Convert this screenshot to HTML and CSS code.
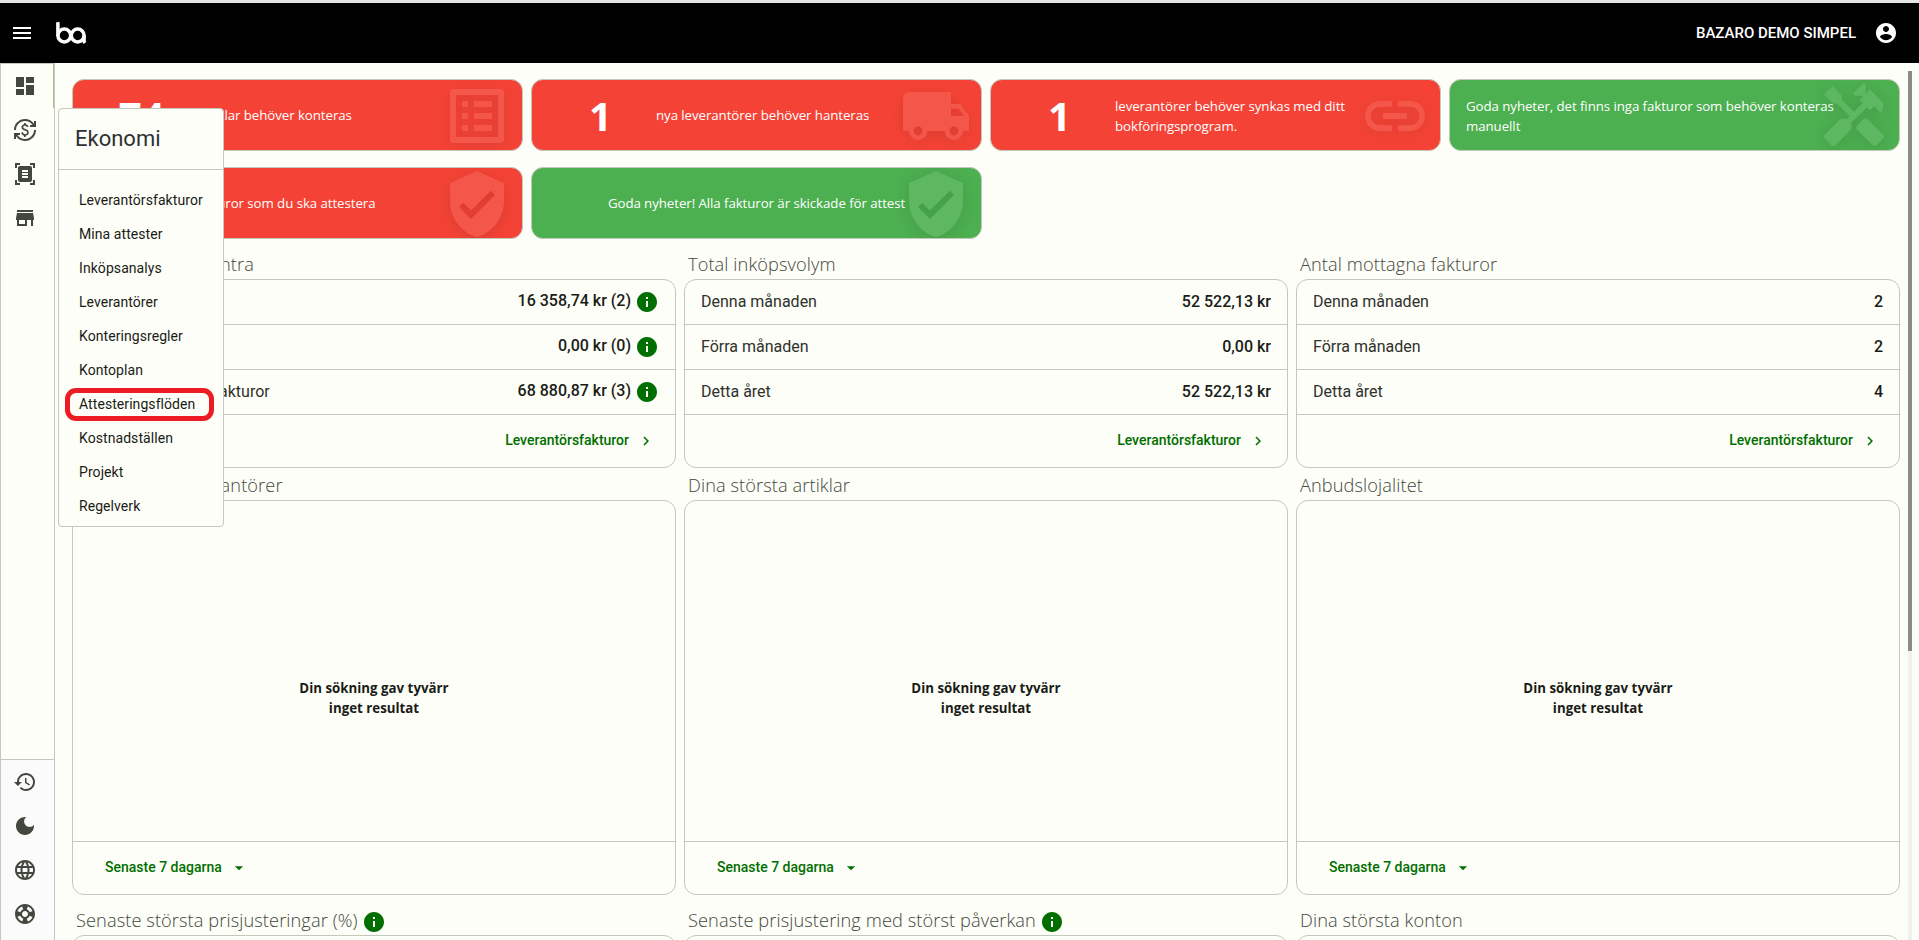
FILE: index.html
```html
<!DOCTYPE html>
<html lang="sv">
<head>
  <meta charset="UTF-8" />
  <meta name="viewport" content="width=device-width, initial-scale=1.0" />
  <title>Bazaro</title>
  <link rel="stylesheet" href="styles.css">
</head>
<body>
  <!-- shared icons -->
  <svg class="sprite">
    <symbol id="i-info" viewBox="0 0 24 24"><path d="M12 2C6.48 2 2 6.48 2 12s4.48 10 10 10 10-4.48 10-10S17.52 2 12 2zm1 15h-2v-6h2v6zm0-8h-2V7h2v2z"/></symbol>
    <symbol id="i-next" viewBox="0 0 24 24"><path d="M10 6L8.59 7.41 13.17 12l-4.58 4.59L10 18l6-6z"/></symbol>
    <symbol id="i-down" viewBox="0 0 24 24"><path d="M6.500 9.500l5.500 5.500 5.500-5.500z"/></symbol>
    <symbol id="i-shield" viewBox="0 0 24 24"><path d="M12 1L3 5v6c0 5.55 3.84 10.74 9 12 5.16-1.26 9-6.45 9-12V5l-9-4zm-2 16l-4-4 1.41-1.41L10 14.17l6.59-6.59L18 9l-8 8z"/></symbol>
  </svg>

  <header class="topbar">
    <svg class="icon" viewBox="0 0 24 24"><path d="M3 18h18v-2H3v2zm0-5h18v-2H3v2zm0-7v2h18V6H3z"/></svg>
    <svg class="logo" viewBox="0 0 32 24">
      <path d="M2.7 1.2q.2 1 .2 3v10.500M29.100 14.500v5q0 1.500.8 2.500"/>
      <circle cx="9.300" cy="14.500" r="6.400"/>
      <circle cx="22.700" cy="14.500" r="6.400"/>
    </svg>
    <span class="company">BAZARO DEMO SIMPEL</span>
    <svg class="icon" viewBox="0 0 24 24"><path d="M12 2C6.48 2 2 6.48 2 12s4.48 10 10 10 10-4.48 10-10S17.52 2 12 2zm0 3c1.66 0 3 1.34 3 3s-1.34 3-3 3-3-1.34-3-3 1.34-3 3-3zm0 14.2c-2.5 0-4.71-1.28-6-3.22.03-1.99 4-3.08 6-3.08 1.99 0 5.97 1.09 6 3.08-1.29 1.94-3.5 3.22-6 3.22z"/></svg>
  </header>

  <div class="layout">
    <nav class="sidebar">
      <div class="sidebar-main">
        <svg class="icon" viewBox="0 0 24 24"><path d="M3 13h8V3H3v10zm0 8h8v-6H3v6zm10 0h8V11h-8v10zm0-18v6h8V3h-8z"/></svg>
        <svg class="icon" viewBox="0 0 24 24"><path d="M12.89 11.1c-1.78-.59-2.64-.96-2.64-1.9 0-1.02 1.11-1.39 1.81-1.39 1.31 0 1.79.99 1.9 1.34l1.58-.67c-.15-.44-.82-1.91-2.66-2.23V5h-1.75v1.26c-2.6.56-2.62 2.85-2.62 2.96 0 2.27 2.25 2.91 3.35 3.31 1.58.56 2.28 1.07 2.28 2.03 0 1.13-1.05 1.61-1.98 1.61-1.82 0-2.34-1.87-2.4-2.09l-1.66.67c.63 2.19 2.28 2.78 2.9 2.96V19h1.75v-1.24c.52-.09 3.02-.59 3.02-3.22.01-1.39-.6-2.61-3-3.44zM3 21H1v-6h6v2H4.52c1.61 2.41 4.36 4 7.48 4 4.97 0 9-4.03 9-9h2c0 6.08-4.92 11-11 11-3.72 0-7.01-1.85-9-4.67V21zM1 12C1 5.92 5.92 1 12 1c3.72 0 7.01 1.85 9 4.67V3h2v6h-6V7h2.48C17.87 4.59 15.12 3 12 3c-4.97 0-9 4.03-9 9H1z"/></svg>
        <svg class="icon" viewBox="0 0 24 24"><path d="M7 3H4v3H2V1h5v2zm15 3V1h-5v2h3v3h2zM7 21H4v-3H2v5h5v-2zm13-3v3h-3v2h5v-5h-2zM19 18c0 1.1-.9 2-2 2H7c-1.1 0-2-.9-2-2V6c0-1.1.9-2 2-2h10c1.1 0 2 .9 2 2v12zM15 8H9v2h6V8zm0 3H9v2h6v-2zm0 3H9v2h6v-2z"/></svg>
        <svg class="icon" viewBox="0 0 24 24"><path d="M20 4H4v2h16V4zm1 10v-2l-1-5H4l-1 5v2h1v6h10v-6h4v6h2v-6h1zm-9 4H6v-4h6v4z"/></svg>
      </div>
      <div class="sidebar-bottom">
        <svg class="icon" viewBox="0 0 24 24"><path d="M13 3c-4.97 0-9 4.03-9 9H1l3.89 3.89.07.14L9 12H6c0-3.87 3.13-7 7-7s7 3.13 7 7-3.13 7-7 7c-1.93 0-3.68-.79-4.94-2.06l-1.42 1.42C8.27 19.99 10.51 21 13 21c4.97 0 9-4.03 9-9s-4.03-9-9-9zm-1 5v5l4.28 2.54.72-1.21-3.5-2.08V8H12z"/></svg>
        <svg class="icon" viewBox="0 0 24 24"><path d="M12 3c-4.97 0-9 4.03-9 9s4.03 9 9 9 9-4.03 9-9c0-.46-.04-.92-.1-1.36-.98 1.37-2.58 2.26-4.4 2.26-2.98 0-5.4-2.42-5.4-5.4 0-1.81.89-3.42 2.26-4.4-.44-.06-.9-.1-1.36-.1z"/></svg>
        <svg class="icon" viewBox="0 0 24 24"><path d="M11.99 2C6.47 2 2 6.48 2 12s4.47 10 9.99 10C17.52 22 22 17.52 22 12S17.52 2 11.99 2zm6.93 6h-2.95c-.32-1.25-.78-2.45-1.38-3.56 1.84.63 3.37 1.91 4.33 3.56zM12 4.04c.83 1.2 1.48 2.53 1.91 3.96h-3.82c.43-1.43 1.08-2.76 1.91-3.96zM4.26 14C4.1 13.36 4 12.69 4 12s.1-1.36.26-2h3.38c-.08.66-.14 1.32-.14 2s.06 1.34.14 2H4.26zm.82 2h2.95c.32 1.25.78 2.45 1.38 3.56-1.84-.63-3.37-1.9-4.33-3.56zm2.95-8H5.08c.96-1.66 2.49-2.93 4.33-3.56C8.81 5.55 8.35 6.75 8.03 8zM12 19.96c-.83-1.2-1.48-2.53-1.91-3.96h3.82c-.43 1.43-1.08 2.76-1.91 3.96zM14.34 14H9.66c-.09-.66-.16-1.32-.16-2s.07-1.35.16-2h4.68c.09.65.16 1.32.16 2s-.07 1.34-.16 2zm.25 5.56c.6-1.11 1.06-2.31 1.38-3.56h2.95c-.96 1.65-2.49 2.93-4.33 3.56zM16.36 14c.08-.66.14-1.32.14-2s-.06-1.34-.14-2h3.38c.16.64.26 1.31.26 2s-.1 1.36-.26 2h-3.38z"/></svg>
        <svg class="icon" viewBox="0 0 24 24"><path d="M12 2C6.48 2 2 6.48 2 12s4.48 10 10 10 10-4.48 10-10S17.52 2 12 2zm7.46 7.12l-2.78 1.15c-.51-1.36-1.58-2.44-2.95-2.94l1.15-2.78c2.1.8 3.77 2.47 4.58 4.57zM12 15c-1.66 0-3-1.34-3-3s1.34-3 3-3 3 1.34 3 3-1.34 3-3 3zM9.13 4.54l1.17 2.78c-1.38.5-2.47 1.59-2.98 2.97L4.54 9.13c.81-2.11 2.48-3.78 4.59-4.59zM4.54 14.87l2.78-1.15c.51 1.38 1.59 2.46 2.97 2.96l-1.17 2.78c-2.1-.81-3.77-2.48-4.58-4.59zm10.34 4.59l-1.15-2.78c1.37-.51 2.45-1.59 2.95-2.97l2.78 1.17c-.81 2.1-2.48 3.77-4.58 4.58z"/></svg>
      </div>
      <div class="active-line"></div>
    </nav>

    <main class="content">
      <section class="alerts">
        <div class="alert red single">
          <b class="number">74</b>
          <p>artiklar behöver konteras</p>
          <svg class="alert-icon" viewBox="0 0 24 24"><path d="M19 5v14H5V5h14m1.1-2H3.9c-.5 0-.9.4-.9.9v16.2c0 .4.4.9.9.9h16.2c.4 0 .9-.5.9-.9V3.9c0-.5-.5-.9-.9-.9zM11 7h6v2h-6V7zm0 4h6v2h-6v-2zm0 4h6v2h-6zM7 7h2v2H7zm0 4h2v2H7zm0 4h2v2H7z"/></svg>
        </div>
        <div class="alert red single">
          <b class="number">1</b>
          <p>nya leverantörer behöver hanteras</p>
          <svg class="alert-icon" viewBox="0 0 24 24"><path d="M20 8h-3V4H3c-1.1 0-2 .9-2 2v11h2c0 1.66 1.34 3 3 3s3-1.34 3-3h6c0 1.66 1.34 3 3 3s3-1.34 3-3h2v-5l-3-4zM6 18.5c-.83 0-1.5-.67-1.5-1.5s.67-1.5 1.5-1.5 1.5.67 1.5 1.5-.67 1.5-1.5 1.5zm13.5-9l1.96 2.5H17V9.5h2.5zm-1.5 9c-.83 0-1.5-.67-1.5-1.5s.67-1.5 1.5-1.5 1.5.67 1.5 1.5-.67 1.5-1.5 1.5z"/></svg>
        </div>
        <div class="alert red">
          <b class="number">1</b>
          <p>leverantörer behöver synkas med ditt<br>bokföringsprogram.</p>
          <svg class="alert-icon" viewBox="0 0 24 24"><path d="M3.9 12c0-1.71 1.39-3.1 3.1-3.1h4V7H7c-2.76 0-5 2.24-5 5s2.24 5 5 5h4v-1.9H7c-1.71 0-3.1-1.39-3.1-3.1zM8 13h8v-2H8v2zm9-6h-4v1.9h4c1.71 0 3.1 1.39 3.1 3.1s-1.39 3.1-3.1 3.1h-4V17h4c2.76 0 5-2.24 5-5s-2.24-5-5-5z"/></svg>
        </div>
        <div class="alert green">
          <p>Goda nyheter, det finns inga fakturor som behöver konteras<br>manuellt</p>
          <svg class="alert-icon" viewBox="0 0 24 24"><path d="M21.67 18.17l-5.3-5.3h-.99l-2.54 2.54v.99l5.3 5.3c.39.39 1.02.39 1.41 0l2.12-2.12c.39-.38.39-1.02 0-1.41zM17.34 10.19l1.41-1.41 2.12 2.12c1.17-1.17 1.17-3.07 0-4.24l-3.54-3.54-1.41 1.41V1.71L15.22 1l-3.54 3.54.71.71h2.83l-1.41 1.41 1.06 1.06-2.89 2.89-4.13-4.13V5.06L4.83 2.04 2 4.87 5.03 7.9h1.41l4.13 4.13-.85.85H7.6l-5.3 5.3c-.39.39-.39 1.02 0 1.41l2.12 2.12c.39.39 1.02.39 1.41 0l5.3-5.3v-2.12l5.15-5.15 1.06 1.05z"/></svg>
        </div>
        <div class="alert red single attest">
          <b class="number">2</b>
          <p>fakturor som du ska attestera</p>
          <svg class="alert-icon"><use href="#i-shield"/></svg>
        </div>
        <div class="alert green single center">
          <p>Goda nyheter! Alla fakturor är skickade för attest</p>
          <svg class="alert-icon"><use href="#i-shield"/></svg>
        </div>
      </section>

      <section class="cards">
        <div>
          <h2>Leverantörsreskontra</h2>
          <div class="card">
            <div class="row"><span>Förfallna</span><b class="up">16 358,74 kr (2)</b><svg class="info"><use href="#i-info"/></svg></div>
            <div class="row"><span>Att betala</span><b class="up">0,00 kr (0)</b><svg class="info"><use href="#i-info"/></svg></div>
            <div class="row"><span>Totalt oreglerade fakturor</span><b class="up">68 880,87 kr (3)</b><svg class="info"><use href="#i-info"/></svg></div>
            <div class="foot right"><a>Leverantörsfakturor</a><svg><use href="#i-next"/></svg></div>
          </div>
        </div>
        <div>
          <h2>Total inköpsvolym</h2>
          <div class="card">
            <div class="row"><span>Denna månaden</span><b>52 522,13 kr</b></div>
            <div class="row"><span>Förra månaden</span><b>0,00 kr</b></div>
            <div class="row"><span>Detta året</span><b>52 522,13 kr</b></div>
            <div class="foot right"><a>Leverantörsfakturor</a><svg><use href="#i-next"/></svg></div>
          </div>
        </div>
        <div>
          <h2>Antal mottagna fakturor</h2>
          <div class="card">
            <div class="row"><span>Denna månaden</span><b>2</b></div>
            <div class="row"><span>Förra månaden</span><b>2</b></div>
            <div class="row"><span>Detta året</span><b>4</b></div>
            <div class="foot right"><a>Leverantörsfakturor</a><svg><use href="#i-next"/></svg></div>
          </div>
        </div>

        <div>
          <h2>Dina största leverantörer</h2>
          <div class="card">
            <div class="empty">Din sökning gav tyvärr<br>inget resultat</div>
            <div class="foot"><a>Senaste 7 dagarna</a><svg><use href="#i-down"/></svg></div>
          </div>
        </div>
        <div>
          <h2>Dina största artiklar</h2>
          <div class="card">
            <div class="empty">Din sökning gav tyvärr<br>inget resultat</div>
            <div class="foot"><a>Senaste 7 dagarna</a><svg><use href="#i-down"/></svg></div>
          </div>
        </div>
        <div>
          <h2>Anbudslojalitet</h2>
          <div class="card">
            <div class="empty">Din sökning gav tyvärr<br>inget resultat</div>
            <div class="foot"><a>Senaste 7 dagarna</a><svg><use href="#i-down"/></svg></div>
          </div>
        </div>

        <div>
          <h2 class="tall">Senaste största prisjusteringar (%)<svg class="info"><use href="#i-info"/></svg></h2>
          <div class="card last"></div>
        </div>
        <div>
          <h2 class="tall">Senaste prisjustering med störst påverkan<svg class="info"><use href="#i-info"/></svg></h2>
          <div class="card last"></div>
        </div>
        <div>
          <h2 class="tall">Dina största konton</h2>
          <div class="card last"></div>
        </div>
      </section>
    </main>
    <div class="scrollbar"><div class="thumb"></div></div>
  </div>

  <!-- submenu -->
  <div class="submenu">
    <h3>Ekonomi</h3>
    <ul>
      <li>Leverantörsfakturor</li>
      <li>Mina attester</li>
      <li>Inköpsanalys</li>
      <li>Leverantörer</li>
      <li>Konteringsregler</li>
      <li>Kontoplan</li>
      <li class="marked">Attesteringsflöden</li>
      <li>Kostnadställen</li>
      <li>Projekt</li>
      <li>Regelverk</li>
    </ul>
  </div>
</body>
</html>
```

FILE: styles.css
```css
*,
*::after {
  box-sizing: border-box;
}

body {
  margin: 0;
  height: 100vh;
  overflow: hidden;
  display: flex;
  flex-direction: column;
  background-color: #fdfef7;
  color: #1a1c18;
  font-family: Roboto, sans-serif;
}

svg {
  fill: currentColor;
  flex: none;
}

.sprite {
  display: none;
}

.icon {
  width: 24px;
  height: 24px;
}

.topbar {
  flex: none;
  height: 63px;
  border-top: 3px solid #e5e5e5;
  padding: 0 21px 0 10px;
  display: flex;
  align-items: center;
  background-color: black;
  color: white;
}

.logo {
  width: 32px;
  height: 24px;
  margin-left: 21px;
  fill: none;
  stroke: white;
  stroke-width: 3.5;
}

.company {
  margin-left: auto;
  margin-right: 18px;
  font-size: 15px;
  font-weight: 500;
}

.layout {
  flex: 1;
  min-height: 0;
  display: flex;
}

.sidebar {
  position: relative;
  width: 55px;
  flex: none;
  border: 1px solid #c3c8bb;
  border-bottom: none;
  display: flex;
  flex-direction: column;
  color: #43483e;
}

.sidebar-main,
.sidebar-bottom {
  display: flex;
  flex-direction: column;
  gap: 20px;
  padding: 10px 12px;
}

.sidebar-main {
  flex: 1;
}

.sidebar-bottom {
  height: 181px;
  border-top: 1px solid #c3c8bb;
  background-color: #fbfbfc;
}

.active-line {
  position: absolute;
  top: 0;
  right: 0;
  width: 1px;
  height: 44px;
  background-color: #a3c394;
}

.content {
  flex: 1;
  padding: 16px 4px 0 17px;
  overflow: hidden;
}

.alerts {
  display: grid;
  grid-template-columns: repeat(4, 1fr);
  gap: 16px 8px;
}

.alert {
  position: relative;
  height: 72px;
  border: 1px solid #c3c8bb;
  border-radius: 12px;
  padding: 1px 16px 0;
  display: flex;
  align-items: center;
  overflow: hidden;
  color: white;
  font-family: "Open Sans", sans-serif;
  font-size: 13.3px;
  font-weight: 500;
  letter-spacing: -0.08px;
  line-height: 20px;
}

.alert p {
  margin: 0;
  white-space: nowrap;
}

.alert.single p {
  padding-bottom: 2px;
}

.alert.attest p {
  margin-left: -3px;
}

.alert.red {
  background-color: #f44336;
}

.alert.green {
  background-color: #4caf50;
}

.alert.center {
  justify-content: center;
}

.number {
  width: 108px;
  padding-right: 3px;
  text-align: center;
  font-size: 40px;
}

.alert-icon {
  position: absolute;
  top: 0;
  right: 9px;
  width: 72px;
  height: 72px;
  opacity: 0.1;
  filter: drop-shadow(0 3px 8px black);
}

.cards {
  display: grid;
  grid-template-columns: repeat(3, 1fr);
  column-gap: 8px;
  padding-top: 8px;
}

h2 {
  margin: 0;
  height: 32px;
  padding: 2px 0 0 4px;
  display: flex;
  align-items: center;
  gap: 4px;
  color: #43483e;
  font-family: "Open Sans", sans-serif;
  font-size: 18.2px;
  font-weight: 300;
  letter-spacing: 0.1px;
}

h2.tall {
  height: 40px;
  padding-top: 10px;
}

.info {
  width: 24px;
  height: 24px;
  color: #006e00;
}

h2 .info {
  margin-top: 3px;
}

.card {
  border: 1px solid #c3c8bb;
  border-radius: 12px;
}

.card.last {
  height: 200px;
}

.row {
  height: 45px;
  padding: 0 16px;
  border-bottom: 1px solid #c3c8bb;
  display: flex;
  align-items: center;
  font-size: 16px;
}

.row span {
  flex: 1;
  padding-bottom: 2px;
  color: #2f312d;
}

.row b {
  padding-bottom: 2px;
  font-weight: 500;
}

.row .up {
  margin-right: 4px;
  padding-bottom: 4px;
}

.foot {
  height: 52px;
  padding-left: 32px;
  display: flex;
  align-items: center;
  gap: 8px;
  color: #006e00;
  font-size: 14px;
  font-weight: 500;
}

.foot a {
  padding-bottom: 2px;
}

.foot svg {
  width: 18px;
  height: 18px;
}

.foot.right {
  justify-content: flex-end;
  padding-right: 20px;
}

.empty {
  height: 341px;
  padding-top: 54px;
  border-bottom: 1px solid #c3c8bb;
  display: flex;
  align-items: center;
  justify-content: center;
  text-align: center;
  font-family: "Open Sans", sans-serif;
  font-size: 13.3px;
  font-weight: bold;
  line-height: 20px;
}

.scrollbar {
  width: 4px;
  margin: 8px 7px 0 4px;
  background-color: #f0f0f0;
}

.thumb {
  height: 580px;
  background-color: #8b8b8b;
}

.submenu {
  position: absolute;
  left: 58px;
  top: 108px;
  width: 166px;
  height: 419px;
  border: 1px solid #c3c8bb;
  border-radius: 4px;
  background-color: #fdfef7;
}

.submenu h3 {
  margin: 0;
  height: 61px;
  padding-left: 16px;
  border-bottom: 1px solid #c3c8bb;
  color: #2f3133;
  font-size: 22px;
  font-weight: 400;
  line-height: 60px;
}

.submenu ul {
  margin: 0;
  padding: 13px 0 0 20px;
  list-style: none;
  font-size: 14px;
  line-height: 34px;
  letter-spacing: 0.07px;
}

.marked {
  position: relative;
}

/* red marker ring */
.marked::after {
  content: "";
  position: absolute;
  left: -14px;
  top: 1px;
  width: 149px;
  height: 33px;
  border: 5px solid #ed1c24;
  border-radius: 11px;
}
```
